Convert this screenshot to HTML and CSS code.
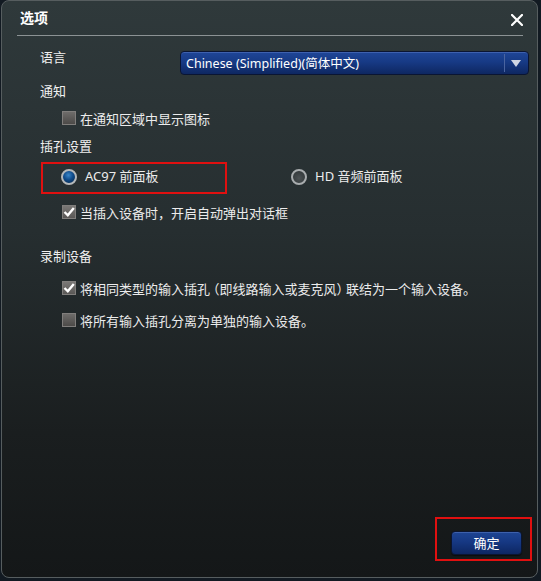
FILE: index.html
```html
<!DOCTYPE html>
<html lang="zh-CN">
<head>
<meta charset="utf-8">
<title>选项</title>
<link rel="stylesheet" href="styles.css">
</head>
<body>
<div class="window">
  <div class="titlebar">
    <span class="title">选项</span>
    <svg class="close" width="12" height="12" viewBox="0 0 12 12"><path d="M1 1 L11 11 M11 1 L1 11" stroke="#ffffff" stroke-width="2.2" stroke-linecap="square"/></svg>
  </div>
  <div class="sep"></div>
  <div class="content">
    <div class="lang-row">
      <span class="label lang-label">语言</span>
      <div class="select">
        <span class="select-text">Chinese (Simplified)(简体中文)</span>
        <span class="select-div"></span>
        <svg class="select-arrow" width="10" height="7" viewBox="0 0 10 7"><path d="M0 0 H10 L5 7 Z" fill="#d0d6e4"/></svg>
      </div>
    </div>
    <div class="label section s-notify">通知</div>
    <div class="check-row r1"><span class="cb"></span><span>在通知区域中显示图标</span></div>
    <div class="label section s-jack">插孔设置</div>
    <div class="radio-row">
      <div class="radio-item boxed"><span class="radio on"></span><span class="radio-text">AC97 前面板</span></div>
      <div class="radio-item second"><span class="radio"></span><span class="radio-text">HD 音频前面板</span></div>
    </div>
    <div class="check-row r2"><span class="cb checked"><svg width="12" height="12" viewBox="0 0 12 12"><path d="M1.5 6 L4.8 9.3 L10.8 2" stroke="#ffffff" stroke-width="2.4" fill="none"/></svg></span><span>当插入设备时，开启自动弹出对话框</span></div>
    <div class="label section s-rec">录制设备</div>
    <div class="check-row r3"><span class="cb checked"><svg width="12" height="12" viewBox="0 0 12 12"><path d="M1.5 6 L4.8 9.3 L10.8 2" stroke="#ffffff" stroke-width="2.4" fill="none"/></svg></span><span>将相同类型的输入插孔<span class="half lp">（</span>即线路输入或麦克风<span class="half rp">）</span>联结为一个输入设备。</span></div>
    <div class="check-row r4"><span class="cb"></span><span>将所有输入插孔分离为单独的输入设备。</span></div>
  </div>
  <div class="footer">
    <div class="btn-box"><button class="btn">确定</button></div>
  </div>
</div>
</body>
</html>
```
FILE: styles.css
```css
html, body {
  margin: 0;
  padding: 0;
}
body {
  background: #121a22;
  width: 541px;
  height: 581px;
  overflow: hidden;
  font-family: "Noto Sans", "Noto Sans CJK SC", sans-serif;
  font-size: 13px;
  color: #ececec;
}
.window {
  margin-left: 1px;
  width: 535px;
  height: 576px;
  border: 1px solid #565d5f;
  border-radius: 8px;
  background: linear-gradient(to bottom, #2f393b 0%, #262e30 40%, #1a1e1f 75%, #141718 100%);
  display: flex;
  flex-direction: column;
}
.titlebar {
  height: 34px;
  display: flex;
  align-items: center;
  padding: 0 14px 0 18px;
  justify-content: space-between;
}
.title {
  font-size: 14px;
  font-weight: bold;
  color: #ffffff;
  margin-top: -2px;
}
.close {
  margin-top: 3px;
}
.sep {
  height: 1px;
  margin: 0 14px 0 15px;
  background: #8c9294;
}
.content {
  padding-left: 38px;
  display: flex;
  flex-direction: column;
}
.lang-row {
  margin-top: 15px;
  height: 24px;
  display: flex;
  align-items: flex-start;
}
.label {
  line-height: 18px;
  color: #f0f0f0;
}
.lang-label {
  margin-top: -3px;
  width: 140px;
}
.select {
  box-sizing: border-box;
  width: 349px;
  height: 24px;
  border: 1px solid #0a1533;
  border-radius: 4px;
  background: linear-gradient(to bottom, #1f4698 0%, #173a85 45%, #0e2761 100%);
  box-shadow: inset 0 1px 0 rgba(120,150,220,0.35);
  display: flex;
  align-items: center;
  padding-left: 5px;
  color: #ffffff;
  font-size: 12.5px;
}
.select-text {
  flex: 1;
  margin-top: -1px;
}
.select-div {
  width: 1px;
  height: 18px;
  background: #4a64a0;
  margin-right: 6px;
}
.select-arrow {
  margin-right: 7px;
}
.s-notify { margin-top: 7px; }
.check-row {
  display: flex;
  align-items: center;
  height: 18px;
  padding-left: 22px;
  gap: 4px;
}
.half {
  font-family: "Noto Sans CJK SC", sans-serif;
  font-feature-settings: "halt";
}
.lp { margin-left: 3px; }
.rp { margin-right: 3px; }
.r1 { margin-top: 9px; }
.s-jack { margin-top: 10px; }
.r2 { margin-top: 9px; }
.s-rec { margin-top: 26px; }
.r3 { margin-top: 14px; }
.r4 { margin-top: 14px; }
.cb {
  box-sizing: border-box;
  width: 14px;
  height: 14px;
  border: 1px solid #807e7c;
  background: linear-gradient(to bottom, #6e6c6a 0%, #4c4a48 100%);
  display: flex;
  align-items: center;
  justify-content: center;
}
.cb.checked {
  background: linear-gradient(to bottom, #7a7876 0%, #5a5856 100%);
}
.radio-row {
  margin-top: 7px;
  display: flex;
  height: 32px;
}
.radio-item {
  display: flex;
  align-items: center;
  gap: 8px;
  padding-bottom: 2px;
  box-sizing: border-box;
  height: 32px;
}
.radio-text {
  margin-top: -4px;
}
.boxed {
  width: 186px;
  margin-left: 1px;
  border: 2px solid #e01010;
  padding-left: 18px;
}
.second {
  margin-left: 64px;
}
.radio {
  box-sizing: border-box;
  width: 16px;
  height: 16px;
  border-radius: 50%;
  border: 2px solid #a8acae;
  background: radial-gradient(circle at 50% 60%, #4c5254 0%, #2c3234 100%);
}
.radio.on {
  border-color: #b4b8ba;
  background: radial-gradient(circle at 45% 35%, #3a86c8 0%, #0f4c8c 45%, #06203e 100%);
}
.footer {
  margin-top: auto;
  display: flex;
  justify-content: flex-end;
  padding: 0 5px 16px 0;
}
.btn-box {
  box-sizing: border-box;
  width: 97px;
  height: 44px;
  border: 2px solid #e01010;
  padding: 12px 0 0 14px;
}
.btn {
  box-sizing: border-box;
  width: 71px;
  height: 24px;
  border: 1px solid #0b1530;
  border-radius: 4px;
  background: linear-gradient(to bottom, #1e4594 0%, #163883 45%, #0d2662 100%);
  box-shadow: inset 0 1px 0 rgba(120,150,220,0.35), 0 1px 1px rgba(0,0,0,0.5);
  color: #ffffff;
  font-family: "Noto Sans CJK SC", sans-serif;
  font-size: 13px;
  padding: 0;
  line-height: 22px;
}
```
